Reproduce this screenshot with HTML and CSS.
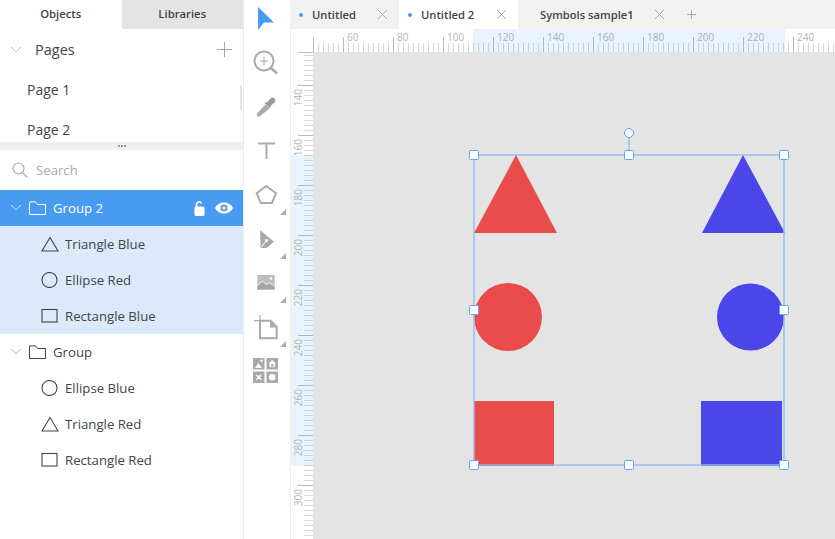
FILE: index.html
```html
<!DOCTYPE html>
<html lang="en">
<head>
    <meta charset="UTF-8">
    <title>Symbols editor</title>
    <link rel="stylesheet" href="styles.css">
</head>
<body>
    <aside class="panel">
        <div class="panel-tabs">
            <div class="panel-tab active">Objects</div>
            <div class="panel-tab">Libraries</div>
        </div>

        <section class="pages">
            <div class="pages-head">
                <svg class="chevron" width="12" height="8" viewBox="0 0 12 8"><path d="M1 1l5 5 5-5" fill="none" stroke="#bbb"/></svg>
                <span class="pages-title">Pages</span>
                <svg class="pages-add" width="15" height="15" viewBox="0 0 15 15"><path d="M7.500 0v15M0 7.500h15" stroke="#a8a8a8"/></svg>
            </div>
            <div class="page-row">Page 1</div>
            <div class="page-row">Page 2</div>
            <div class="scroll-thumb"></div>
        </section>

        <div class="splitter"><span></span><span></span><span></span></div>

        <div class="search">
            <svg width="16" height="16" viewBox="0 0 16 16"><circle cx="6.500" cy="6.500" r="5.500" fill="none" stroke="#aaa" stroke-width="1.200"/><path d="M10.500 10.500l5 5" stroke="#aaa" stroke-width="1.200"/></svg>
            <span>Search</span>
        </div>

        <div class="layer layer-group selected">
            <svg class="chevron" width="12" height="8" viewBox="0 0 12 8"><path d="M1 1l5 5 5-5" fill="none" stroke="#cfe3fb"/></svg>
            <svg class="folder" width="17" height="14" viewBox="0 0 17 14"><path d="M.5 13.500V.9h6l2 2.600h8v10z" fill="none" stroke="#fff"/></svg>
            <span class="layer-name">Group 2</span>
            <svg class="lock" width="11" height="15" viewBox="0 0 11 15"><path d="M2.500 6V3.500a2.600 2.600 0 0 1 5-1" fill="none" stroke="#fff" stroke-width="1.500"/><rect x="0.500" y="5.500" width="10" height="9.500" rx="1.500" fill="#fff"/></svg>
            <svg class="eye" width="18" height="12" viewBox="0 0 18 12"><path d="M0 6c2-3.600 5.200-5.500 9-5.500S16 2.400 18 6c-2 3.600-5.200 5.500-9 5.500S2 9.600 0 6z" fill="#fff"/><circle cx="9" cy="6" r="3.600" fill="#499bf2"/><circle cx="9" cy="6" r="1.800" fill="#fff"/></svg>
        </div>
        <div class="layer layer-child tinted">
            <svg width="18" height="16" viewBox="0 0 18 16"><path d="M9 1.500L17 15H1z" fill="none" stroke="#444" stroke-width="1.100"/></svg>
            <span class="layer-name">Triangle Blue</span>
        </div>
        <div class="layer layer-child tinted">
            <svg width="18" height="16" viewBox="0 0 18 16"><circle cx="8.500" cy="8" r="7.500" fill="none" stroke="#444" stroke-width="1.100"/></svg>
            <span class="layer-name">Ellipse Red</span>
        </div>
        <div class="layer layer-child tinted">
            <svg width="18" height="16" viewBox="0 0 18 16"><rect x="1" y="1.500" width="15" height="12.500" fill="none" stroke="#444" stroke-width="1.100"/></svg>
            <span class="layer-name">Rectangle Blue</span>
        </div>

        <div class="layer layer-group">
            <svg class="chevron" width="12" height="8" viewBox="0 0 12 8"><path d="M1 1l5 5 5-5" fill="none" stroke="#bbb"/></svg>
            <svg class="folder" width="17" height="14" viewBox="0 0 17 14"><path d="M.5 13.500V.9h6l2 2.600h8v10z" fill="none" stroke="#444"/></svg>
            <span class="layer-name">Group</span>
        </div>
        <div class="layer layer-child">
            <svg width="18" height="16" viewBox="0 0 18 16"><circle cx="8.500" cy="8" r="7.500" fill="none" stroke="#444" stroke-width="1.100"/></svg>
            <span class="layer-name">Ellipse Blue</span>
        </div>
        <div class="layer layer-child">
            <svg width="18" height="16" viewBox="0 0 18 16"><path d="M9 1.500L17 15H1z" fill="none" stroke="#444" stroke-width="1.100"/></svg>
            <span class="layer-name">Triangle Red</span>
        </div>
        <div class="layer layer-child">
            <svg width="18" height="16" viewBox="0 0 18 16"><rect x="1" y="1.500" width="15" height="12.500" fill="none" stroke="#444" stroke-width="1.100"/></svg>
            <span class="layer-name">Rectangle Red</span>
        </div>
    </aside>

    <nav class="tools">
        <svg class="tool" viewBox="0 0 45 44"><path d="M14 11l16 15.500H20L14 34z" fill="#499bf2"/></svg>
        <svg class="tool" viewBox="0 0 45 44"><g fill="none" stroke="#a9a9a9" stroke-width="2"><circle cx="20" cy="21" r="9.500"/><path d="M27 28l6 5.500" stroke-width="2.400"/><path d="M20 16.500v9M15.500 21h9" stroke-width="1"/></g></svg>
        <svg class="tool" viewBox="0 0 45 44"><path d="M13 29.500L21.500 20.500 25.500 24.500 15.500 32.500H13z" fill="#aaa"/><path d="M20.500 19l3-1 3-3.500a2.500 2.500 0 0 1 4 4l-3.500 3-1 3z" fill="#9a9a9a"/></svg>
        <svg class="tool" viewBox="0 0 45 44"><path d="M14 15.500h17M22.500 15.500V31" fill="none" stroke="#aaa" stroke-width="2"/></svg>
        <svg class="tool" viewBox="0 0 45 44"><path d="M22.300 14l9.700 7.300L28 31H16.700L12.700 21.300z" fill="none" stroke="#aaa" stroke-width="2"/><path d="M42 37v6h-6z" fill="#aaa"/></svg>
        <svg class="tool" viewBox="0 0 45 44"><path d="M16 14L30 25.700 22.700 32H16.700z" fill="#aaa"/><path d="M17.500 31l4.500-6" stroke="#fff" fill="none"/><circle cx="22.500" cy="24.500" r="1.500" fill="#fff"/><path d="M42 37v6h-6z" fill="#aaa"/></svg>
        <svg class="tool" viewBox="0 0 45 44"><rect x="13.300" y="15" width="17.400" height="14.500" fill="#bdbdbd"/><path d="M13.300 29.500v-3l5-4.500 4 3.500 3-2 5.400 3.500v2.500z" fill="#a5a5a5"/><path d="M13.300 25.500l5-4.500 4 3.500 3-2 5.400 3.500" fill="none" stroke="#f2f2f2" stroke-width=".8"/><circle cx="27" cy="18.500" r="1.300" fill="#fff"/><path d="M42 37v6h-6z" fill="#aaa"/></svg>
        <svg class="tool" viewBox="0 0 45 44"><path d="M16 16.700h10.700l6 6v11.600H16z" fill="none" stroke="#aaa" stroke-width="2"/><path d="M26 16.700l6.700 6.700H26z" fill="#aaa"/><path d="M10 16.700h10M16 11v11" stroke="#aaa" stroke-width="1.200"/><path d="M42 37v6h-6z" fill="#aaa"/></svg>
        <svg class="tool" viewBox="0 0 45 44">
            <g fill="#a9a9a9"><rect x="9" y="10" width="11.500" height="11.500"/><rect x="22.500" y="10" width="11.500" height="11.500"/><rect x="9" y="23.500" width="11.500" height="11.500"/><rect x="22.500" y="23.500" width="11.500" height="11.500"/></g>
            <g fill="#fff"><path d="M11 20l3.500-5 3.500 5z"/><circle cx="17.500" cy="12.800" r="1.200"/><path d="M28.200 12l3.800 3.500h-1.200v3.800h-5.200v-3.800h-1.200z"/><path d="M11.500 26l3.200 1.800 3.300-1.800-1.800 3.200 1.800 3.300-3.300-1.800-3.200 1.800 1.800-3.300z"/><circle cx="28.200" cy="29.200" r="3.300"/></g>
            <rect x="27.200" y="16" width="2" height="3" fill="#a9a9a9"/>
        </svg>
    </nav>

    <main class="editor">
        <div class="doc-tabs">
            <div class="doc-tab">
                <span class="doc-dot"></span>
                <span class="doc-name">Untitled</span>
                <svg class="doc-close" width="11" height="11" viewBox="0 0 11 11"><path d="M1 1l9 9M10 1l-9 9" stroke="#aaa"/></svg>
            </div>
            <div class="doc-tab active">
                <span class="doc-dot"></span>
                <span class="doc-name">Untitled 2</span>
                <svg class="doc-close" width="11" height="11" viewBox="0 0 11 11"><path d="M1 1l9 9M10 1l-9 9" stroke="#aaa"/></svg>
            </div>
            <div class="doc-tab plain">
                <span class="doc-name">Symbols sample1</span>
                <svg class="doc-close" width="11" height="11" viewBox="0 0 11 11"><path d="M1 1l9 9M10 1l-9 9" stroke="#aaa"/></svg>
            </div>
            <svg class="doc-add" width="11" height="11" viewBox="0 0 11 11"><path d="M5.500 1v9M1 5.500h9" stroke="#aaa"/></svg>
        </div>

        <div class="ruler-row">
            <div class="ruler-corner"></div>
            <div class="ruler-top">
                <div class="mark-top"></div>
                <div class="rt-cell first"></div>
                <div class="rt-cell">60</div>
                <div class="rt-cell">80</div>
                <div class="rt-cell">100</div>
                <div class="rt-cell">120</div>
                <div class="rt-cell">140</div>
                <div class="rt-cell">160</div>
                <div class="rt-cell">180</div>
                <div class="rt-cell">200</div>
                <div class="rt-cell">220</div>
                <div class="rt-cell">240</div>
            </div>
        </div>

        <div class="workspace">
            <div class="ruler-left">
                <div class="mark-left"></div>
                <div class="rl-cell first"></div>
                <div class="rl-cell"><span>140</span></div>
                <div class="rl-cell"><span>160</span></div>
                <div class="rl-cell"><span>180</span></div>
                <div class="rl-cell"><span>200</span></div>
                <div class="rl-cell"><span>220</span></div>
                <div class="rl-cell"><span>240</span></div>
                <div class="rl-cell"><span>260</span></div>
                <div class="rl-cell"><span>280</span></div>
                <div class="rl-cell"><span>300</span></div>
            </div>

            <svg class="canvas" viewBox="313 52 522 487">
                <path d="M516 155L557 233H474z" fill="#ea4c4c"/>
                <path d="M743 155L785 233H702z" fill="#4b46e8"/>
                <circle cx="508" cy="317" r="34" fill="#ea4c4c"/>
                <circle cx="750.500" cy="317" r="33.500" fill="#4b46e8"/>
                <rect x="474" y="401" width="80" height="65" fill="#ea4c4c"/>
                <rect x="701" y="401" width="81" height="65" fill="#4b46e8"/>

                <g fill="none" stroke="#8fbdf1" stroke-width="1.400">
                    <rect x="474" y="155" width="310" height="310"/>
                    <path d="M629 137v18"/>
                </g>
                <g fill="#fff" stroke="#5ea6f3">
                    <circle cx="629" cy="133" r="4.500"/>
                    <rect x="469.500" y="150.500" width="9" height="9" rx="1"/>
                    <rect x="624.500" y="150.500" width="9" height="9" rx="1"/>
                    <rect x="779.500" y="150.500" width="9" height="9" rx="1"/>
                    <rect x="469.500" y="305.500" width="9" height="9" rx="1"/>
                    <rect x="779.500" y="305.500" width="9" height="9" rx="1"/>
                    <rect x="469.500" y="460.500" width="9" height="9" rx="1"/>
                    <rect x="624.500" y="460.500" width="9" height="9" rx="1"/>
                    <rect x="779.500" y="460.500" width="9" height="9" rx="1"/>
                </g>
            </svg>
        </div>
    </main>
</body>
</html>
```

FILE: styles.css
```css
html, body {
    height: 100%;
}

body {
    margin: 0;
    display: flex;
    overflow: hidden;
    background-color: #fff;
    color: #444;
    font-family: "Open Sans", "Noto Sans", sans-serif;
    font-size: 13.2px;
}

/* left panel */
.panel {
    width: 243px;
    flex-shrink: 0;
    border-right: 1px solid #ececec;
}

.panel-tabs {
    display: flex;
    height: 29px;
}

.panel-tab {
    flex: 1;
    line-height: 28px;
    text-align: center;
    font-size: 11.3px;
    font-weight: 600;
    background-color: #e4e4e4;
}

.panel-tab.active {
    background-color: #fff;
}

.pages {
    position: relative;
    height: 113px;
    overflow: hidden;
}

.pages-head {
    display: flex;
    align-items: center;
    height: 41px;
    padding-left: 10px;
    padding-right: 11px;
}

.pages-title {
    flex: 1;
    margin-left: 13px;
    font-size: 14.5px;
    font-weight: 500;
}

.page-row {
    height: 40px;
    padding-left: 27px;
    line-height: 40px;
    font-size: 14px;
}

.scroll-thumb {
    position: absolute;
    top: 56px;
    right: 1px;
    width: 2px;
    height: 25px;
    background-color: #e4e4e4;
}

.splitter {
    display: flex;
    justify-content: center;
    align-items: center;
    gap: 1px;
    height: 8px;
    background-color: #f0f0f0;
}

.splitter span {
    width: 2px;
    height: 2px;
    background-color: #999;
}

.search {
    display: flex;
    align-items: center;
    gap: 8px;
    height: 40px;
    padding-left: 12px;
    color: #aaa;
}

.layer {
    display: flex;
    align-items: center;
    height: 36px;
}

.layer-group {
    padding-left: 10px;
}

.layer-group .folder {
    margin-left: 7px;
    margin-right: 7px;
}

.layer-child {
    padding-left: 41px;
}

.layer-child svg {
    margin-right: 6px;
}

.layer-name {
    flex: 1;
}

.selected {
    background-color: #499bf2;
    color: #fff;
}

.tinted {
    background-color: #dbe9fb;
}

.lock {
    margin-right: 10px;
}

.eye {
    margin-right: 10px;
}

/* tool column */
.tools {
    width: 46px;
    flex-shrink: 0;
    margin-top: -4px;
}

.tool {
    display: block;
    width: 45px;
    height: 44px;
}

/* editor */
.editor {
    flex: 1;
    display: flex;
    flex-direction: column;
    min-width: 0;
}

.doc-tabs {
    display: flex;
    align-items: center;
    height: 29px;
    flex-shrink: 0;
    background-color: #f1f1f1;
}

.doc-tab {
    display: flex;
    align-items: center;
    width: 109px;
    height: 100%;
    box-sizing: border-box;
    padding-left: 9px;
    font-size: 11.2px;
    font-weight: 600;
}

.doc-tab.active {
    width: 119px;
    background-color: #fff;
}

.doc-tab.plain {
    width: 158px;
    padding-left: 22px;
}

.doc-dot {
    width: 4px;
    height: 4px;
    margin-right: 9px;
    border-radius: 50%;
    background-color: #499bf2;
}

.doc-name {
    flex: 1;
}

.doc-close {
    margin-right: 11px;
}

.doc-add {
    margin-left: 10px;
}

/* rulers */
.ruler-row {
    display: flex;
    height: 23px;
    flex-shrink: 0;
}

.ruler-corner {
    width: 23px;
    flex-shrink: 0;
    border-left: 1px solid #eee;
    box-sizing: border-box;
}

.ruler-top {
    position: relative;
    flex: 1;
    display: flex;
    overflow: hidden;
    background: linear-gradient(90deg, #d8d8d8 1px, transparent 1px) left bottom / 5px 9px repeat-x;
}

.rt-cell {
    width: 50px;
    flex-shrink: 0;
    box-sizing: border-box;
    padding-left: 4px;
    color: #b3b3b3;
    font-size: 10px;
    line-height: 16px;
    background: linear-gradient(#bbb, #bbb) left bottom / 1px 15px no-repeat;
}

.rt-cell.first {
    width: 30px;
}

.mark-top {
    position: absolute;
    top: 0;
    bottom: 0;
    left: 160px;
    width: 312px;
    background-color: rgba(74, 155, 242, 0.12);
}

.workspace {
    flex: 1;
    display: flex;
    min-height: 0;
}

.ruler-left {
    position: relative;
    width: 23px;
    flex-shrink: 0;
    box-sizing: border-box;
    border-left: 1px solid #eee;
    overflow: hidden;
    background: linear-gradient(#d8d8d8 1px, transparent 1px) right 3px / 9px 5px repeat-y;
}

.rl-cell {
    height: 50px;
    padding-top: 4px;
    padding-left: 2px;
    box-sizing: border-box;
    background: linear-gradient(#bbb, #bbb) right top / 15px 1px no-repeat;
}

.rl-cell.first {
    height: 33px;
}

.rl-cell span {
    display: block;
    writing-mode: vertical-rl;
    transform: rotate(180deg);
    color: #b3b3b3;
    font-size: 10px;
    line-height: 10px;
}

.mark-left {
    position: absolute;
    top: 103px;
    left: 0;
    right: 0;
    height: 311px;
    background-color: rgba(74, 155, 242, 0.12);
}

.canvas {
    flex: 1;
    display: block;
    min-width: 0;
    height: 100%;
    background-color: #e4e4e4;
}
```
